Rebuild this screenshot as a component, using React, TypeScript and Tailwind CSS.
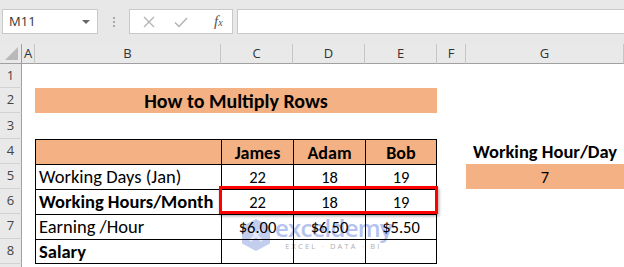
import React from "react";

const cellFont = { fontFamily: "Carlito, Lato, 'Open Sans', sans-serif" };
const uiFont = { fontFamily: "'Open Sans', 'Noto Sans', 'Liberation Sans', sans-serif" };

function RowHead({ n, last }: { n: string; last?: boolean }) {
  return (
    <div
      className={`flex items-center justify-center bg-[#e9e9e9] border-r border-r-[#a0a0a0] ${
        last ? "" : "border-b border-b-[#d2d2d2]"
      } text-[13px] text-[#444]`}
      style={uiFont}
    >
      {n}
    </div>
  );
}

function ColHead({ l }: { l: string }) {
  return (
    <div
      className="flex items-center justify-center bg-[#e9e9e9] border-r border-r-[#c6c6c6] border-b border-b-[#a0a0a0] text-[13px] text-[#333] pt-[1px]"
      style={uiFont}
    >
      {l}
    </div>
  );
}

function E() {
  return <div />;
}

export default function App() {
  const tb = "border-l border-t border-black";
  const lab = "flex items-center pl-[3px] text-[18.5px] leading-none pt-[1px]";
  const num = "flex items-center justify-center text-[16.5px] leading-none pt-[1px]";
  const hdr = "bg-[#f4b183] flex items-center justify-center font-bold text-[18px] leading-none pt-[1px]";
  return (
    <div className="relative w-[624px] h-[267px] overflow-hidden bg-white">
      {/* Toolbar */}
      <div className="relative z-10 h-[44px] bg-[#e8e8e8] flex items-start pt-[9px] pl-[2px]">
        <div
          className="w-[96px] h-[25px] bg-white border border-[#c9c9c9] flex items-center justify-between pl-[6px] pr-[7px] text-[13px] text-[#333]"
          style={uiFont}
        >
          <span>M11</span>
          <span className="w-0 h-0 border-l-[4px] border-r-[4px] border-t-[4px] border-l-transparent border-r-transparent border-t-[#666]" />
        </div>
        <div className="w-[31px] h-[25px] flex flex-col items-center justify-center gap-[2px]">
          <span className="w-[2px] h-[2px] bg-[#a8a8a8]" />
          <span className="w-[2px] h-[2px] bg-[#a8a8a8]" />
          <span className="w-[2px] h-[2px] bg-[#a8a8a8]" />
        </div>
        <div className="w-[104px] h-[25px] bg-white border border-[#c9c9c9] flex items-center">
          <svg width="14" height="14" viewBox="0 0 14 14" className="ml-[12px]">
            <path d="M2 2 L12 12 M12 2 L2 12" stroke="#b3b3b3" strokeWidth="1.3" fill="none" />
          </svg>
          <svg width="16" height="14" viewBox="0 0 16 14" className="ml-[17px]">
            <path d="M2 7.5 L6 11.5 L14 3" stroke="#b3b3b3" strokeWidth="1.5" fill="none" />
          </svg>
          <span
            className="ml-[25px] text-[15px] italic text-[#555] leading-none"
            style={{ fontFamily: "'Liberation Serif', 'DejaVu Serif', serif" }}
          >
            f<span className="text-[10px]">x</span>
          </span>
        </div>
        <div className="ml-[4px] flex-1 h-[25px] bg-white border border-[#c9c9c9] border-r-0" />
      </div>

      {/* Watermark (behind the grid) */}
      <div className="pointer-events-none absolute z-0 left-[240px] top-[216px] flex items-start">
        <svg width="32" height="34" viewBox="0 0 32 34" className="mt-[2px]">
          <path d="M16 1 L30 8.5 L30 25.5 L16 33 L2 25.5 L2 8.5 Z" fill="#c3cdee" />
          <path d="M10 11 L16 17 L10 23 M22 11 L16 17 L22 23" stroke="#e6ebf8" strokeWidth="3" fill="none" />
        </svg>
        <div className="ml-[3px] flex flex-col items-center leading-none">
          <span
            className="text-[24px] font-semibold text-[#b4c3ef] tracking-[-0.8px]"
            style={{ fontFamily: "'Open Sans', sans-serif", lineHeight: "24px" }}
          >
            exceldemy
          </span>
          <span
            className="text-[7.5px] text-[#b0b0b0] tracking-[2.2px] mt-[3px]"
            style={{ fontFamily: "'Open Sans', sans-serif" }}
          >
            EXCEL · DATA · BI
          </span>
        </div>
      </div>

      {/* Sheet grid */}
      <div
        className="relative z-10 grid grid-cols-[22px_13px_186px_72px_72px_72px_29px_1fr] grid-rows-[20px_24px_25px_26px_25px_25px_25px_25px_25px_1fr] h-[223px] text-black"
        style={cellFont}
      >
        {/* header row */}
        <div className="relative bg-[#e9e9e9] border-r border-r-[#a0a0a0] border-b border-b-[#a0a0a0]">
          <div
            className="absolute right-[3px] bottom-[3px] w-0 h-0"
            style={{ borderLeft: "13px solid transparent", borderBottom: "13px solid #b9b9b9" }}
          />
        </div>
        <ColHead l="A" />
        <ColHead l="B" />
        <ColHead l="C" />
        <ColHead l="D" />
        <ColHead l="E" />
        <ColHead l="F" />
        <ColHead l="G" />

        {/* Row 1 */}
        <RowHead n="1" />
        <E /><E /><E /><E /><E /><E /><E />

        {/* Row 2 */}
        <RowHead n="2" />
        <E />
        <div className="col-span-4 bg-[#f4b183] flex items-center justify-center font-bold text-[20px] leading-none pt-[1px]">
          How to Multiply Rows
        </div>
        <E /><E />

        {/* Row 3 */}
        <RowHead n="3" />
        <E /><E /><E /><E /><E /><E /><E />

        {/* Row 4 */}
        <RowHead n="4" />
        <E />
        <div className={`${tb} bg-[#f4b183]`} />
        <div className={`${tb} ${hdr}`}>James</div>
        <div className={`${tb} ${hdr}`}>Adam</div>
        <div className={`${tb} border-r ${hdr}`}>Bob</div>
        <E />
        <div className="flex items-center justify-center font-bold text-[18.5px] leading-none pt-[1px]">Working Hour/Day</div>

        {/* Row 5 */}
        <RowHead n="5" />
        <E />
        <div className={`${tb} ${lab}`}>Working Days (Jan)</div>
        <div className={`${tb} ${num}`}>22</div>
        <div className={`${tb} ${num}`}>18</div>
        <div className={`${tb} border-r ${num}`}>19</div>
        <E />
        <div className={`bg-[#f4b183] ${num}`}>7</div>

        {/* Row 6 */}
        <RowHead n="6" />
        <E />
        <div className={`${tb} ${lab} font-bold`}>Working Hours/Month</div>
        <div className={`${tb} ${num}`}>22</div>
        <div className={`${tb} ${num}`}>18</div>
        <div className={`${tb} border-r ${num}`}>19</div>
        <E /><E />

        {/* Row 7 */}
        <RowHead n="7" />
        <E />
        <div className={`${tb} ${lab}`}>Earning /Hour</div>
        <div className={`${tb} ${num}`}>$6.00</div>
        <div className={`${tb} ${num}`}>$6.50</div>
        <div className={`${tb} border-r ${num}`}>$5.50</div>
        <E /><E />

        {/* Row 8 */}
        <RowHead n="8" />
        <E />
        <div className={`${tb} border-b ${lab} font-bold`}>Salary</div>
        <div className={`${tb} border-b`} />
        <div className={`${tb} border-b`} />
        <div className={`${tb} border-b border-r`} />
        <E /><E />

        {/* Row 9 (partial) */}
        <RowHead n="" last />
        <E /><E /><E /><E /><E /><E /><E />
      </div>

      {/* Red highlight box */}
      <div className="pointer-events-none absolute z-20 left-[219px] top-[186px] w-[219px] h-[28px] border-[3px] border-[#ff0000] shadow-[1px_2px_3px_rgba(0,0,0,0.35)]" />
    </div>
  );
}
